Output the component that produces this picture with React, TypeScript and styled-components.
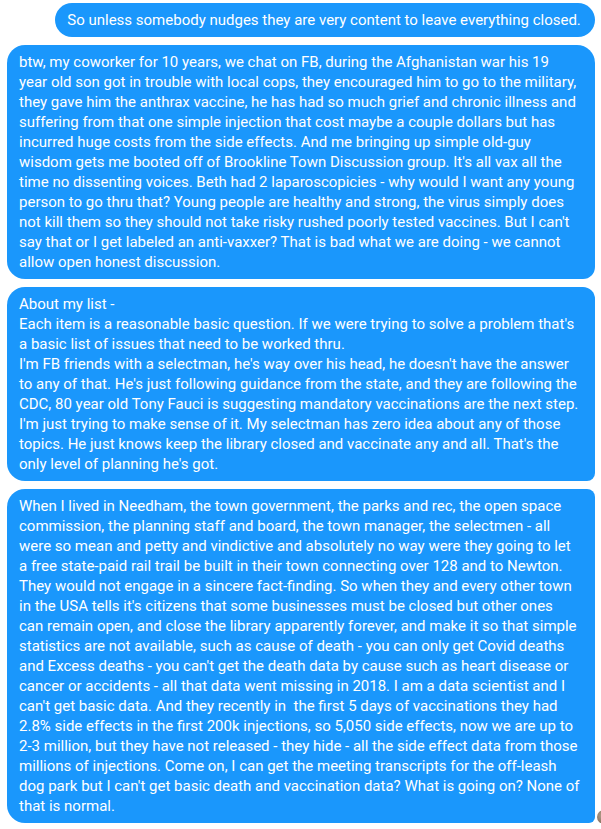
import React from "react";
import styled, { createGlobalStyle } from "styled-components";

const Global = createGlobalStyle`
  html, body { margin: 0; padding: 0; background: #ffffff; overflow: hidden; }
  body { font-family: Roboto, "Noto Sans", "Liberation Sans", sans-serif; }
`;

const Thread = styled.div`
  display: flex;
  flex-direction: column;
  align-items: flex-end;
  gap: 8px;
  padding: 3px 6px 0 7px;
  width: 601px;
  box-sizing: border-box;
`;

type Corner = { tr: number; br: number };

const Bubble = styled.div<{ $tr: number; $br: number }>`
  position: relative;
  max-width: 588px;
  box-sizing: border-box;
  padding: 7px 14.1875px 7px 12px;
  background: #1a97fc;
  color: #ffffff;
  font-size: 15px;
  line-height: 20px;
  white-space: pre-wrap;
  border-radius: 18px ${(p) => p.$tr}px ${(p) => p.$br}px 18px;
`;

const SeenAvatar = styled.span`
  position: absolute;
  right: -16px;
  bottom: -1px;
  width: 14px;
  height: 14px;
  border-radius: 50%;
  background: radial-gradient(circle at 40% 40%, #b8a48e 0%, #8a7664 60%, #6e5e50 100%);
`;

const messages: { text: string; c: Corner; seen?: boolean }[] = [
  {
    text: "So unless somebody nudges they are very content to leave everything closed.",
    c: { tr: 18, br: 18 },
  },
  {
    text: "btw, my coworker for 10 years, we chat on FB, during the Afghanistan war his 19 year old son got in trouble with local cops, they encouraged him to go to the military, they gave him the anthrax vaccine, he has had so much grief and chronic illness and suffering from that one simple injection that cost maybe a couple dollars but has incurred huge costs from the side effects. And me bringing up simple old-guy wisdom gets me booted off of Brookline Town Discussion group. It's all vax all the time no dissenting voices. Beth had 2 laparoscopicies - why would I want any young person to go thru that? Young people are healthy and strong, the virus simply does not kill them so they should not take risky rushed poorly tested vaccines. But I can't say that or I get labeled an anti-vaxxer? That is bad what we are doing - we cannot allow open honest discussion.",
    c: { tr: 18, br: 12 },
  },
  {
    text: "About my list -\nEach item is a reasonable basic question. If we were trying to solve a problem that's a basic list of issues that need to be worked thru.\nI'm FB friends with a selectman, he's way over his head, he doesn't have the answer to any of that. He's just following guidance from the state, and they are following the CDC, 80 year old Tony Fauci is suggesting mandatory vaccinations are the next step. I'm just trying to make sense of it. My selectman has zero idea about any of those topics. He just knows keep the library closed and vaccinate any and all. That's the only level of planning he's got.",
    c: { tr: 12, br: 8 },
  },
  {
    text: "When I lived in Needham, the town government, the parks and rec, the open space commission, the planning staff and board, the town manager, the selectmen - all were so mean and petty and vindictive and absolutely no way were they going to let a free state-paid rail trail be built in their town connecting over 128 and to Newton. They would not engage in a sincere fact-finding. So when they and every other town in the USA tells it's citizens that some businesses must be closed but other ones can remain open, and close the library apparently forever, and make it so that simple statistics are not available, such as cause of death - you can only get Covid deaths and Excess deaths - you can't get the death data by cause such as heart disease or cancer or accidents - all that data went missing in 2018. I am a data scientist and I can't get basic data. And they recently in  the first 5 days of vaccinations they had 2.8% side effects in the first 200k injections, so 5,050 side effects, now we are up to 2-3 million, but they have not released - they hide - all the side effect data from those millions of injections. Come on, I can get the meeting transcripts for the off-leash dog park but I can't get basic death and vaccination data? What is going on? None of that is normal.",
    c: { tr: 8, br: 6 },
    seen: true,
  },
];

export default function App() {
  return (
    <>
      <Global />
      <Thread>
        {messages.map((m, i) => (
          <Bubble key={i} $tr={m.c.tr} $br={m.c.br}>
            {m.text}
            {m.seen && <SeenAvatar />}
          </Bubble>
        ))}
      </Thread>
    </>
  );
}
